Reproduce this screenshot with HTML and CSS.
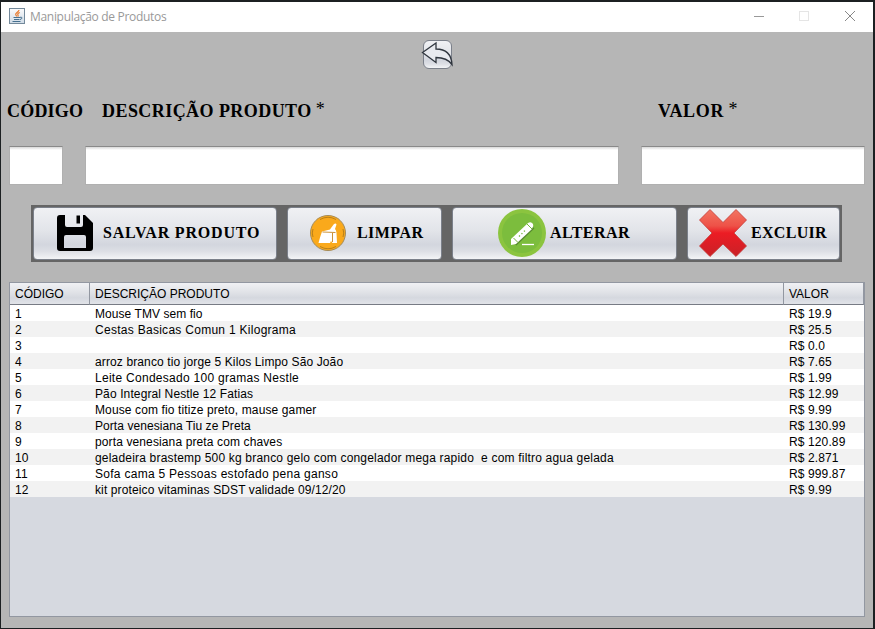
FILE: index.html
```html
<!DOCTYPE html>
<html lang="pt-BR">
<head>
<meta charset="utf-8">
<title>Manipulação de Produtos</title>
<link rel="stylesheet" href="styles.css">
</head>
<body>
<div class="window">
  <header class="titlebar">
    <svg class="app-icon" width="16" height="16" viewBox="0 0 16 16">
      <defs><linearGradient id="ji" x1="0" y1="0" x2="0" y2="1"><stop offset="0" stop-color="#fbfbfc"/><stop offset="1" stop-color="#cfdbe6"/></linearGradient></defs>
      <rect x=".5" y=".5" width="15" height="15" fill="url(#ji)" stroke="#73899b"/>
      <path d="M10 2C10 4 6.300 4.500 6.700 6.500Q6.900 7.500 8 8.400M10.800 4.500Q8 5.500 9 7Q9.500 8 8.700 8.600" fill="none" stroke="#e8792b" stroke-width="1.200"/>
      <path d="M4.500 9.500H11M5 11.500H10.500M3.500 13.500H11.500M11 9.300Q14 9 12.500 10.800L11 11.600" fill="none" stroke="#46708f"/>
    </svg>
    <span class="title">Manipulação de Produtos</span>
    <svg class="controls" width="104" height="14" viewBox="0 0 104 14" fill="none" shape-rendering="crispEdges">
      <path d="M0 6.500H10" stroke="#999"/>
      <rect x="45.500" y="1.500" width="9" height="9" stroke="#e5e5e5"/>
      <path d="M91 1L101 11M101 1L91 11" stroke="#888" shape-rendering="auto"/>
    </svg>
  </header>
  <main class="content">
    <button class="back" aria-label="Voltar">
      <svg width="34" height="30" viewBox="0 0 34 30"><path d="M1.500 12.500L15 3V9Q30 9 31 24.500Q26 17.500 15 17.500V22.500Z" fill="#e8eaef" stroke="#30363f" stroke-width="1.300"/></svg>
    </button>
    <div class="labels">
      <label class="l-code">CÓDIGO</label>
      <label class="l-desc">DESCRIÇÃO PRODUTO <i>*</i></label>
      <label class="l-value">VALOR <i>*</i></label>
    </div>
    <div class="fields">
      <input type="text"><input type="text"><input type="text">
    </div>
    <div class="actions">
      <button class="btn save">
        <svg width="36" height="36" viewBox="0 0 36 36"><path d="M3 0H8V10Q8 12 10 12H24Q26 12 26 10V0H28L36 8V33Q36 36 33 36H3Q0 36 0 33V3Q0 0 3 0ZM9 20Q7 20 7 22V33H29V22Q29 20 27 20Z" fill="#000" fill-rule="evenodd"/><path d="M19.500 .5H23V8.500H19.500Z" fill="#000"/></svg>
        <span>SALVAR PRODUTO</span>
      </button>
      <button class="btn clear">
        <svg width="36" height="36" viewBox="0 0 36 36"><circle cx="18" cy="18" r="17.500" fill="#faa91b" stroke="#a38b5b"/><path d="M10 4.500Q18 0 26 4.500M3 22Q1.500 18 3 14M33 22Q34.500 18 33 14M10 31.500Q18 36 26 31.500" fill="none" stroke="#a97517" stroke-width=".8"/><path d="M12 16.500L20 14.500L21 13L24 9Q26 8 26.500 9.500L25 14L26 15.500L26.500 18L27 28H22.500L21 26L20 28H8.500L10 22.500Z" fill="#fff"/><path d="M12.500 17L25.500 17.500M22.500 18V27" fill="none" stroke="#c58422" stroke-width=".9"/></svg>
        <span>LIMPAR</span>
      </button>
      <button class="btn edit">
        <svg width="48" height="48" viewBox="0 0 48 48"><circle cx="24" cy="24" r="24" fill="#8bc43f"/><circle cx="24" cy="24" r="20" fill="#7cbd3d"/><path d="M17 35L35 18" stroke="#568a2d" stroke-width="4"/><path d="M13 36V30L30 14Q33 12 35 15Q36 17 34 20L18 35Z" fill="#fff"/><path d="M15.500 29L20 33.500M29 15L34 20" stroke="#74b73c" stroke-width="1"/><path d="M21 27.500L28 20.500" stroke="#74b73c" stroke-width="1.300" stroke-dasharray="1.300 2.200"/><path d="M24 35.500H36" stroke="#fff" stroke-width="1.300"/></svg>
        <span>ALTERAR</span>
      </button>
      <button class="btn delete">
        <svg width="48" height="48" viewBox="0 0 48 48"><defs><linearGradient id="rx" x1="0" y1="0" x2="0" y2="1"><stop offset="0" stop-color="#f27562"/><stop offset=".35" stop-color="#ee5147"/><stop offset=".5" stop-color="#ec1c24"/><stop offset="1" stop-color="#c92127"/></linearGradient></defs><path d="M11 .5L24 13.500L37 .5L47.500 11L35 24L47.500 37L37 47.500L24 35L11 47.500L.5 37L13 24L.5 11Z" fill="url(#rx)" stroke="#c43a36" stroke-width=".8"/></svg>
        <span>EXCLUIR</span>
      </button>
    </div>
    <div class="table-box">
      <table>
        <colgroup><col class="c1"><col class="c2"><col class="c3"></colgroup>
        <thead><tr><th>CÓDIGO</th><th>DESCRIÇÃO PRODUTO</th><th>VALOR</th></tr></thead>
        <tbody>
          <tr><td>1</td><td class="narrow">Mouse TMV sem fio</td><td>R$ 19.9</td></tr>
          <tr><td>2</td><td class="wider">Cestas Basicas Comun 1 Kilograma</td><td>R$ 25.5</td></tr>
          <tr><td>3</td><td></td><td>R$ 0.0</td></tr>
          <tr><td>4</td><td>arroz branco tio jorge 5 Kilos Limpo São João</td><td>R$ 7.65</td></tr>
          <tr><td>5</td><td class="wider">Leite Condesado 100 gramas Nestle</td><td>R$ 1.99</td></tr>
          <tr><td>6</td><td>Pão Integral Nestle 12 Fatias</td><td>R$ 12.99</td></tr>
          <tr><td>7</td><td>Mouse com fio titize preto, mause gamer</td><td>R$ 9.99</td></tr>
          <tr><td>8</td><td class="narrow">Porta venesiana Tiu ze Preta</td><td>R$ 130.99</td></tr>
          <tr><td>9</td><td>porta venesiana preta com chaves</td><td>R$ 120.89</td></tr>
          <tr><td>10</td><td class="wide">geladeira brastemp 500 kg branco gelo com congelador mega rapido  e com filtro agua gelada</td><td>R$ 2.871</td></tr>
          <tr><td>11</td><td class="wider">Sofa cama 5 Pessoas estofado pena ganso</td><td>R$ 999.87</td></tr>
          <tr><td>12</td><td>kit proteico vitaminas SDST validade 09/12/20</td><td>R$ 9.99</td></tr>
        </tbody>
      </table>
    </div>
  </main>
</div>
</body>
</html>
```
FILE: styles.css
```css
* { box-sizing: border-box; }
body { margin: 0; width: 875px; height: 629px; overflow: hidden; background: #1c2022; padding: 2px 2px 1px 1px; }
.window { width: 872px; height: 626px; background: #b6b6b6; display: flex; flex-direction: column; }
.titlebar { height: 30px; background: #fff; display: flex; align-items: center; padding: 0 15px 0 8px; flex: none; }
.app-icon { margin-top: -2px; }
.title { margin-left: 5px; font: 12px/16px "Open Sans", sans-serif; color: #999; letter-spacing: -.31px; flex: 1; }
.content { padding: 7px 8px 11px; display: flex; flex-direction: column; flex: 1; min-height: 0; }
button { font: bold 16px/20px "Liberation Serif", serif; color: #000; padding: 0; border: 1px solid #7b808a; border-radius: 4px; background: linear-gradient(#f0f1f4 0%, #e2e4e9 45%, #d3d6de 72%, #dddfe5 85%, #f3f4f6 100%); }
.back { width: 29px; height: 29px; align-self: center; margin: 1px 0 0 0; display: flex; border-radius: 6px; flex: none; overflow: visible; }
.back svg { flex: none; margin: -1px 0 0 -3px; }
.labels { display: flex; height: 24px; margin-top: 30px; font: bold 18px/24px "Liberation Serif", serif; color: #000; }
.labels i { font: 18px/20px "Liberation Serif", serif; letter-spacing: 0; margin-left: -1px; position: relative; top: -2px; }
.l-code { width: 95px; margin-left: -2px; letter-spacing: .2px; }
.l-desc { width: 556px; letter-spacing: .44px; }
.l-value { letter-spacing: .7px; }
.fields { display: grid; grid-template-columns: 54px 534px 224px; column-gap: 22px; height: 39px; margin-top: 23px; }
.fields input { width: 100%; height: 39px; padding: 4px; border: 1px solid #b0b0b0; border-top-color: #898989; background: linear-gradient(#d8d8d8, #fff 3px); outline: 0; }
.actions { width: 811px; height: 57px; margin: 20px 0 0 22px; padding: 2px; background: #656565; display: grid; grid-template-columns: 244px 155px 225px 153px; column-gap: 10px; flex: none; }
.btn { height: 53px; padding-bottom: 2px; display: flex; align-items: center; justify-content: flex-start; letter-spacing: .45px; white-space: nowrap; }
.save { letter-spacing: .8px; }
.save svg { margin: 0 10px 0 23px; }
.clear svg { margin: 0 11px 0 22px; }
.edit svg { margin: 0 4px 0 45px; }
.delete svg { margin: 0 4px 0 11px; }
.delete { letter-spacing: .3px; }
.table-box { margin-top: 20px; flex: 1; border: 1px solid #9297a1; background: #d6d9e0; overflow: hidden; }
table { width: 100%; table-layout: fixed; border-collapse: separate; border-spacing: 0; font: 12px/16px "Liberation Sans", Arial, sans-serif; color: #000; }
.c1 { width: 80px; } .c2 { width: 694px; }
th { height: 22px; padding: 0 5px; text-align: left; font-weight: normal; border-bottom: 1px solid #777b84; border-right: 1px solid #9297a1; background: linear-gradient(#f0f1f4, #dfe1e6 48%, #d5d8df 70%, #e1e3e8); }
td { height: 16px; padding: 2px 5px 0; line-height: 14px; white-space: pre; letter-spacing: .12px; }
td.narrow { letter-spacing: .06px; }
td.wide { letter-spacing: .19px; }
td.wider { letter-spacing: .28px; }
tbody tr { background: #fff; }
tbody tr:nth-child(even) { background: #f2f2f2; }
```
